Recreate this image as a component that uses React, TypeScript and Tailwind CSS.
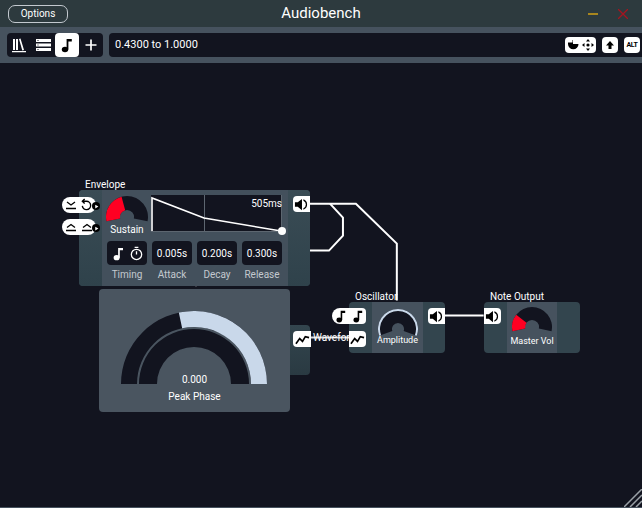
import React from 'react';

const polar = (cx: number, cy: number, r: number, deg: number) => {
  const a = ((deg - 90) * Math.PI) / 180;
  return [cx + r * Math.cos(a), cy + r * Math.sin(a)];
};

// ring segment, angles are clockwise from straight up
const ring = (cx: number, cy: number, r1: number, r2: number, from: number, to: number) => {
  const [ax, ay] = polar(cx, cy, r1, from);
  const [bx, by] = polar(cx, cy, r1, to);
  const [dx, dy] = polar(cx, cy, r2, to);
  const [ex, ey] = polar(cx, cy, r2, from);
  const large = to - from > 180 ? 1 : 0;
  return `M${ax} ${ay}A${r1} ${r1} 0 ${large} 1 ${bx} ${by}L${dx} ${dy}A${r2} ${r2} 0 ${large} 0 ${ex} ${ey}Z`;
};

function Note({ className = 'w-4 h-4' }: { className?: string }) {
  return (
    <svg viewBox="0 0 16 16" className={className} fill="currentColor">
      <ellipse cx="6" cy="12.5" rx="3.2" ry="2.8" />
      <path d="M7.6 2h5.2v2.6H9.4V12.500H7.6z" />
    </svg>
  );
}

function Speaker() {
  return (
    <svg viewBox="0 0 16 16" className="h-[15px] w-[15px] text-black" fill="currentColor">
      <path d="M1 5.5h3L8.5 2v12L4 10.5H1z" />
      <path d="M10 2.500a5.800 5.800 0 0 1 0 11v-1.600a4.200 4.200 0 0 0 0-7.800z" />
    </svg>
  );
}

function Wave() {
  return (
    <svg viewBox="0 0 16 16" className="h-[15px] w-[15px]" fill="none" stroke="#000" strokeWidth="1.8">
      <path d="M1 12.500l4-5.500 3 3 3-5 4 1" />
    </svg>
  );
}

function PlayDot() {
  return (
    <span className="absolute -right-[4px] top-[5px] flex h-2 w-2 items-center justify-center rounded-full bg-black">
      <svg viewBox="0 0 8 8" className="h-[5px] w-[5px]" fill="#fff">
        <path d="M2 1l5 3-5 3z" />
      </svg>
    </span>
  );
}

function Pin({ className, children }: { className: string; children: React.ReactNode }) {
  return (
    <div className={`absolute z-30 flex items-center justify-center bg-white text-black ${className}`}>{children}</div>
  );
}

function Knob({ from, to, r = 21 }: { from: number; to: number; r?: number }) {
  return (
    <svg viewBox="0 0 44 28" className="h-[28px] w-[44px]">
      <path d={ring(22, 21, r, 7, -102, 102)} fill="#12141f" />
      <path d={ring(22, 21, r, 7, from, to)} fill="#ff0022" />
    </svg>
  );
}

function TimeBox({ value, label }: { value: string; label: string }) {
  return (
    <div className="flex w-10 flex-col items-center">
      <div className="flex h-6 w-10 items-center justify-center rounded bg-[#12141f] text-[10px] text-white">{value}</div>
      <span className="mt-[3px] text-[10px] leading-[14px] text-[#c3c9cf]">{label}</span>
    </div>
  );
}

function Wires() {
  return (
    <svg className="absolute inset-0 z-20 h-full w-full" viewBox="0 0 642 445" fill="none">
      <path d="M310 141H356L397 181V238" stroke="#fff" strokeWidth="2" />
      <path d="M330 141L343 155V173L329 188H310" stroke="#fff" strokeWidth="2" />
      <path d="M310 188H232L195 224" stroke="#fff" strokeWidth="2" opacity="0.22" />
      <path d="M311 275H350" stroke="#fff" strokeWidth="2" opacity="0.85" />
      <path d="M444 253H484" stroke="#fff" strokeWidth="2" />
    </svg>
  );
}

function EnvelopeNode() {
  return (
    <>
      <span className="absolute left-[85px] top-[115px] text-[10px] leading-[14px] text-white">Envelope</span>
      <div className="absolute left-[79px] top-[127px] z-30 flex h-[96px] w-[231px] overflow-hidden rounded bg-[#33454e]/90">
        <div className="w-[23px] bg-gradient-to-b from-[#3a4c55] to-[#2f424b]" />
        <div className="flex w-[186px] flex-col bg-[#46525e]/90 pl-[5px]">
          <div className="flex h-[51px] items-start">
            <div className="flex w-[40px] flex-col items-center pt-[6px]">
              <div className="-mx-[2px] -mb-[1px] h-[28px]">
                <Knob from={-102} to={-15} />
              </div>
              <span className="text-[10px] leading-[14px] text-white">Sustain</span>
            </div>
            <div className="relative ml-[4px] mt-[5px] h-[37px] w-[131px] bg-[#12141f]">
              <svg viewBox="0 0 131 37" className="absolute inset-0 h-full w-full" fill="none">
                <path d="M53.500 0V37" stroke="#5d6670" />
                <path d="M1 36V3L53 23L130 36" stroke="#fff" strokeWidth="1.600" />
                <path d="M0 36.500H131M130.500 0V37" stroke="#5d6670" />
              </svg>
              <span className="absolute right-0 top-[2px] text-[10px] leading-[14px] text-white">505ms</span>
              <span className="absolute -bottom-[3px] -right-[4px] h-2 w-2 rounded-full bg-white" />
            </div>
          </div>
          <div className="flex gap-[5px]">
            <div className="flex w-10 flex-col items-center">
              <div className="flex h-6 w-10 items-center justify-center gap-[3px] rounded bg-[#12141f] text-white">
                <Note className="h-[15px] w-[15px]" />
                <svg viewBox="0 0 16 16" className="h-[15px] w-[15px]" fill="none" stroke="#fff" strokeWidth="1.400">
                  <circle cx="8" cy="9" r="5.500" />
                  <path d="M6 1.500h4M8 9V5.500" />
                </svg>
              </div>
              <span className="mt-[3px] text-[10px] leading-[14px] text-[#c3c9cf]">Timing</span>
            </div>
            <TimeBox value="0.005s" label="Attack" />
            <TimeBox value="0.200s" label="Decay" />
            <TimeBox value="0.300s" label="Release" />
          </div>
        </div>
        <div className="w-[22px] bg-gradient-to-b from-[#3a4c55] to-[#2f424b]" />
      </div>
      <Pin className="left-[62px] top-[134px] h-4 w-[18px] rounded-l-full">
        <svg viewBox="0 0 12 12" className="h-3 w-3" fill="none" stroke="#000" strokeWidth="1.300">
          <path d="M2 3l4 3 4-3M1 9.500h10" />
        </svg>
      </Pin>
      <Pin className="left-[80px] top-[134px] h-4 w-[16px] rounded-r-lg">
        <svg viewBox="0 0 14 14" className="-ml-[3px] -mt-[2px] h-[13px] w-[13px]" fill="none" stroke="#000" strokeWidth="1.500">
          <path d="M5 1L2.500 3.500 5 6M3 3.500h4a4.500 4.500 0 1 1-4.500 5" />
        </svg>
        <PlayDot />
      </Pin>
      <Pin className="left-[62px] top-[156px] h-4 w-[18px] rounded-l-full">
        <svg viewBox="0 0 12 12" className="h-3 w-3" fill="none" stroke="#000" strokeWidth="1.300">
          <path d="M2 6.500l4-3 4 3M1 9.500h10" />
        </svg>
      </Pin>
      <Pin className="left-[80px] top-[156px] h-4 w-[16px] rounded-r-lg">
        <svg viewBox="0 0 12 12" className="-ml-[3px] h-3 w-3" fill="none" stroke="#000" strokeWidth="1.300">
          <path d="M2 6.500l4-3 4 3M1 9.500h10" />
        </svg>
        <PlayDot />
      </Pin>
      <Pin className="left-[293px] top-[133px] h-4 w-[17px] rounded-l">
        <Speaker />
      </Pin>
    </>
  );
}

function PeakPhase() {
  return (
    <div className="absolute left-[99px] top-[226px] z-40 flex h-[123px] w-[191px] flex-col items-center rounded bg-[#4a5560]">
      <svg viewBox="0 0 191 95" className="h-[95px] w-[191px] shrink-0">
        <path d={ring(95, 95, 73, 57, -90, 90)} fill="#12141f" />
        <path d={ring(95, 95, 73, 57, -12, 90)} fill="#c9d8ea" />
        <path d={ring(95, 95, 55, 37, -90, 90)} fill="#12141f" />
      </svg>
      <span className="-mt-[11px] text-[10px] leading-[14px] text-white">0.000</span>
      <span className="mt-[3px] text-[10px] leading-[14px] text-white">Peak Phase</span>
    </div>
  );
}

function OscillatorNode() {
  return (
    <>
      <span className="absolute left-[355px] top-[227px] z-10 text-[10px] leading-[14px] text-white">Oscillator</span>
      <div className="absolute left-[290px] top-[262px] h-[50px] w-[20px] rounded-r bg-gradient-to-b from-[#33454e] to-[#2a3a42]" />
      <Pin className="left-[293px] top-[268px] z-40 h-4 w-[18px] rounded-l bg-[#e4e6e8]">
        <Wave />
      </Pin>
      <span className="absolute left-[313px] top-[268px] z-10 text-[10px] leading-[14px] text-white">Waveform</span>
      <div className="absolute left-[349px] top-[239px] z-30 flex h-[51px] w-[96px] overflow-hidden rounded bg-[#33454e]">
        <div className="w-[23px]" />
        <div className="flex w-[51px] flex-col items-center bg-[#46525e]">
          <svg viewBox="0 0 44 28" className="mt-[6px] h-[28px] w-[44px] shrink-0">
            <path d={ring(22, 21, 20, 6, -110, 110)} fill="#12141f" />
            <path d={ring(22, 21, 20, 18, -110, 110)} fill="#c9d8ea" />
          </svg>
          <span className="-mt-[3px] text-[9px] leading-[14px] text-white">Amplitude</span>
        </div>
        <div className="w-[22px]" />
      </div>
      <Pin className="left-[332px] top-[245px] h-4 w-[17px] rounded-l-full">
        <Note className="h-[14px] w-[14px]" />
      </Pin>
      <Pin className="left-[349px] top-[245px] h-4 w-[17px] rounded-r">
        <Note className="h-[14px] w-[14px]" />
      </Pin>
      <Pin className="left-[349px] top-[268px] h-4 w-[17px] rounded-r">
        <Wave />
      </Pin>
      <Pin className="left-[428px] top-[245px] h-4 w-[17px] rounded-l">
        <Speaker />
      </Pin>
    </>
  );
}

function OutputNode() {
  return (
    <>
      <span className="absolute left-[490px] top-[227px] text-[10px] leading-[14px] text-white">Note Output</span>
      <div className="absolute left-[484px] top-[239px] z-10 flex h-[51px] w-[96px] overflow-hidden rounded bg-[#33454e]">
        <div className="w-[23px]" />
        <div className="flex w-[50px] flex-col items-center bg-[#46525e]">
          <div className="mt-[4px] h-[28px]">
            <Knob from={-102} to={-52} r={20} />
          </div>
          <span className="text-[9px] leading-[14px] text-white">Master Vol</span>
        </div>
        <div className="w-[23px]" />
      </div>
      <Pin className="left-[484px] top-[245px] z-30 h-4 w-[17px] rounded-r">
        <Speaker />
      </Pin>
    </>
  );
}

export default function App() {
  return (
    <div className="flex h-[508px] w-[642px] flex-col overflow-hidden bg-[#12141f] font-['Roboto',sans-serif] text-white">
      <div className="relative flex h-[27px] items-center bg-[#2d3a3e] px-2">
        <button className="h-[18px] w-[60px] rounded-[7px] border border-[#c3c9cf] text-[10px] leading-none text-white">
          Options
        </button>
        <span className="absolute left-0 right-0 text-center text-[15px] text-white">Audiobench</span>
        <div className="ml-auto mr-[6px] flex items-center gap-5">
          <span className="h-[2px] w-[10px] bg-[#a8861e]" />
          <svg viewBox="0 0 10 10" className="h-[10px] w-[10px]" fill="none" stroke="#a5141f" strokeWidth="1.300">
            <path d="M0 0l10 10M10 0L0 10" />
          </svg>
        </div>
      </div>
      <div className="flex h-9 items-center gap-[6px] bg-[#46525e] pl-[7px]">
        <div className="flex h-6 w-[96px] items-center rounded bg-[#12141f]">
          <div className="flex w-6 justify-center">
            <svg viewBox="0 0 16 16" className="h-4 w-4" fill="#fff">
              <path d="M2 2h2v11H2zM5 2h2v11H5zM8 2l1.500-.5L13 13l-1.700.500zM1 14h14v1.300H1z" />
            </svg>
          </div>
          <div className="flex w-6 justify-center">
            <svg viewBox="0 0 16 16" className="h-4 w-4" fill="#fff">
              <path d="M1 2h15v3H1zM1 6.500h15v3H1zM1 11h15v3H1z" />
              <path d="M2.500 3h1v1h-1zM2.500 7.500h1v1h-1zM2.500 12h1v1h-1z" fill="#12141f" />
            </svg>
          </div>
          <div className="flex h-6 w-6 items-center justify-center rounded bg-white text-black">
            <Note />
          </div>
          <div className="flex w-6 justify-center">
            <svg viewBox="0 0 16 16" className="h-4 w-4" fill="none" stroke="#fff" strokeWidth="1.700">
              <path d="M8 2.500v11M2.500 8h11" />
            </svg>
          </div>
        </div>
        <div className="flex h-6 flex-1 items-center rounded-l bg-[#12141f] pl-[6px] pr-[2px]">
          <span className="text-[11px]">0.4300 to 1.0000</span>
          <div className="ml-auto flex items-center gap-[6px]">
            <div className="flex h-4 w-[31px] items-center justify-between rounded bg-white px-[2px]">
              <svg viewBox="0 0 12 12" className="h-3 w-3" fill="#000">
                <path d="M1 3.500h4.500V1H6v4h5.500a5 5 0 0 1-10.500 0z" />
              </svg>
              <svg viewBox="0 0 12 12" className="h-3 w-3" fill="#000">
                <path d="M6 0l2 2.500H4zM6 12l2-2.500H4zM0 6l2.500-2v4zM12 6l-2.500-2v4z" />
                <circle cx="6" cy="6" r="1.600" />
              </svg>
            </div>
            <div className="flex h-4 w-4 items-center justify-center rounded bg-white">
              <svg viewBox="0 0 12 12" className="h-3 w-3" fill="#000">
                <path d="M6 2l4 4.500H7.500V10h-3V6.500H2z" />
              </svg>
            </div>
            <div className="flex h-4 w-4 items-center justify-center rounded bg-white text-[7px] font-bold leading-none tracking-tighter text-black">
              ALT
            </div>
          </div>
        </div>
      </div>
      <div className="relative flex-1 border-b border-[#46525e]">
        <Wires />
        <EnvelopeNode />
        <PeakPhase />
        <OscillatorNode />
        <OutputNode />
        <svg viewBox="0 0 18 18" className="absolute bottom-0 right-0 h-[18px] w-[18px]" stroke="#9aa0a6" strokeWidth="1.500">
          <path d="M0 18L18 0M6 18L18 6M12 18L18 12" />
        </svg>
      </div>
    </div>
  );
}
